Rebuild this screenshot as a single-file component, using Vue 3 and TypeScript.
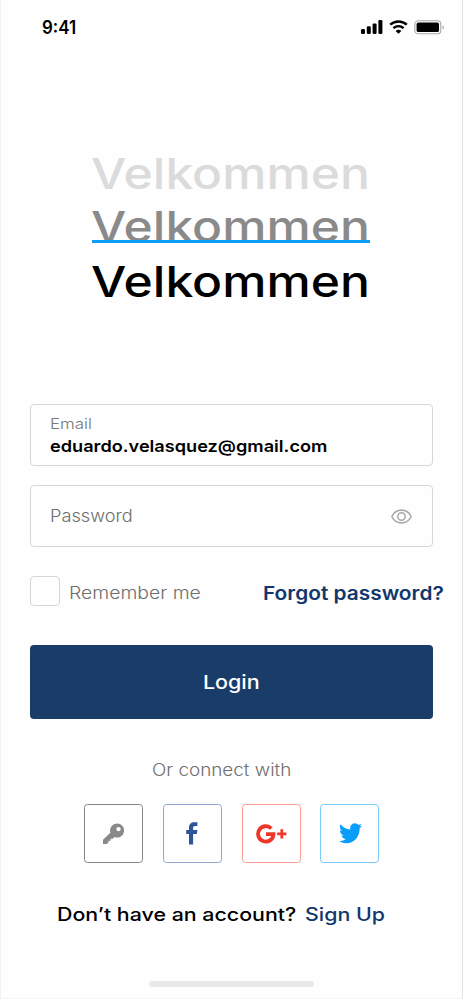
<script setup lang="ts">
import { ref } from 'vue'

interface Provider {
  id: string
  label: string
}

const providers: Provider[] = [
  { id: 'key', label: 'Key' },
  { id: 'facebook', label: 'Facebook' },
  { id: 'google', label: 'Google Plus' },
  { id: 'twitter', label: 'Twitter' },
]
const greeting = 'Velkommen'
const email = ref('eduardo.velasquez@gmail.com')
const remember = ref(false)
</script>

<template>
  <main class="screen">
    <header class="status">
      <span class="time wide">9:41</span>
      <div class="indicators">
        <svg class="signal" viewBox="0 0 22 14">
          <rect x="0" y="9" width="4" height="5" rx="1.2" />
          <rect x="5.8" y="6.3" width="4" height="7.7" rx="1.2" />
          <rect x="11.6" y="3.4" width="4" height="10.6" rx="1.2" />
          <rect x="17.4" y="0" width="4" height="14" rx="1.2" />
        </svg>
        <svg class="wifi" viewBox="0 0 19 14">
          <path d="M1.2 4.7C6 .4 13 .4 17.8 4.7" />
          <path d="M4.4 8.2c3-2.6 7.2-2.6 10.2 0" />
          <path class="dot" d="M6.6 10.9c1.7-1.5 4.1-1.5 5.8 0L9.5 13.8z" />
        </svg>
        <svg class="battery" viewBox="0 0 31 15">
          <rect class="shell" x=".8" y=".8" width="26" height="13" rx="3.4" />
          <rect x="2.6" y="2.6" width="22.4" height="9.4" rx="1.6" />
          <path class="cap" d="M28.6 5.2c1.8.7 1.8 3.7 0 4.4z" />
        </svg>
      </div>
    </header>

    <section class="hero">
      <div class="word faint"><span class="wide">{{ greeting }}</span></div>
      <div class="word mid"><span class="wide">{{ greeting }}</span></div>
      <h1 class="word"><span class="wide">{{ greeting }}</span></h1>
    </section>

    <form class="form" @submit.prevent>
      <div class="field filled">
        <span class="label wide">Email</span>
        <span class="value wide">{{ email }}</span>
      </div>
      <div class="field empty">
        <span class="placeholder wide">Password</span>
        <svg class="eye" viewBox="0 0 20 14">
          <path d="M.8 7C2.7 3 6.100.9 10 .9S17.300 3 19.200 7c-1.900 4-5.300 6.100-9.200 6.100S2.700 11 .8 7z" />
          <circle cx="10" cy="7" r="3.500" />
        </svg>
      </div>
      <div class="options">
        <button type="button" class="check" :aria-checked="remember" role="checkbox" @click="remember = !remember"></button>
        <span class="remember wide">Remember me</span>
        <a class="forgot wide">Forgot password?</a>
      </div>
      <button class="login"><span class="wide">Login</span></button>
    </form>

    <section class="connect">
      <p><span class="wide">Or connect with</span></p>
      <div class="providers">
        <button v-for="p in providers" :key="p.id" :class="['provider', p.id]" :aria-label="p.label">
          <svg v-if="p.id === 'key'" width="21" height="21" viewBox="0.4 0.8 21.1 20.2">
            <path fill-rule="evenodd" d="M14.400.8a7.100 7.100 0 1 1-2.500 13.700l-1.700 1.600H8.100v2.100H6v2.100H4.800v1.200H.4v-4.300l7.400-7.100A7.100 7.100 0 0 1 14.400.8zM16 4.300a2.200 2.200 0 1 0 0 4.400 2.200 2.200 0 0 0 0-4.400z" />
          </svg>
          <svg v-else-if="p.id === 'facebook'" width="12" height="23" viewBox="0 0 12 23">
            <path d="M3 22.500V12H.2V8.100H3V5.600C3 2.100 5 .2 8.200.2h3.200v3.900H9.200C7.700 4.100 7.100 4.800 7.100 6v2.100h4.300L10.800 12H7.100v10.500z" />
          </svg>
          <svg v-else-if="p.id === 'google'" width="31" height="20" viewBox="0 0 31 20">
            <path class="ring" d="M15.300 4.500A7.700 7.700 0 1 0 17.500 10.100H10" />
            <path class="plus" d="M25.800 5.300v9.200M21.200 9.900h9.200" />
          </svg>
          <svg v-else width="23" height="21" viewBox="0 2 24 20.500" preserveAspectRatio="none">
            <path d="M23.950 4.570a10 10 0 0 1-2.820.78 4.960 4.960 0 0 0 2.160-2.720 9.900 9.900 0 0 1-3.120 1.180 4.920 4.920 0 0 0-8.380 4.480C7.690 8.090 4.070 6.130 1.640 3.160a4.820 4.820 0 0 0-.67 2.480c0 1.710.87 3.210 2.190 4.100a4.900 4.900 0 0 1-2.230-.62v.06a4.920 4.920 0 0 0 3.950 4.830 5 5 0 0 1-2.210.08 4.940 4.940 0 0 0 4.600 3.420A9.870 9.870 0 0 1 0 19.540a13.990 13.990 0 0 0 7.550 2.210c9.050 0 14-7.500 14-13.990 0-.21 0-.42-.02-.63a9.940 9.940 0 0 0 2.460-2.550z" />
          </svg>
        </button>
      </div>
    </section>

    <footer class="signup">
      <span class="question wide">Don’t have an account?</span>
      <a class="link wide">Sign Up</a>
    </footer>
    <div class="home"></div>
  </main>
</template>

<style>
body {
  background: #fefefe;
}
</style>

<style scoped>
.screen {
  box-sizing: border-box;
  width: 463px;
  height: 999px;
  display: flex;
  flex-direction: column;
  overflow: hidden;
  border-left: 1px solid #f2f2f2;
  border-right: 1px solid #e2e2e2;
  border-bottom: 1px solid #f4f4f4;
  background: #fefefe;
  color: #000;
  font-family: Inter, 'Liberation Sans', sans-serif;
}
.wide {
  display: block;
  white-space: nowrap;
  transform: scaleX(var(--stretch, 1.1));
  transform-origin: left center;
}
button {
  margin: 0;
  padding: 0;
  font: inherit;
  background: none;
  border: 0;
}
.status {
  display: flex;
  justify-content: space-between;
  align-items: center;
  height: 54px;
  padding: 0 17px 0 41px;
}
.time {
  font-size: 18px;
  font-weight: 600;
  --stretch: 0.94;
}
.indicators {
  display: flex;
  align-items: center;
  gap: 6px;
}
.signal {
  width: 22px;
  height: 14px;
}
.wifi {
  width: 19px;
  height: 14px;
  fill: none;
  stroke: #000;
  stroke-width: 2.4;
}
.wifi .dot {
  fill: #000;
  stroke: none;
}
.battery {
  width: 31px;
  height: 15px;
}
.battery .shell {
  fill: none;
  stroke: #a6a6a6;
  stroke-width: 1.1;
}
.battery .cap {
  fill: #a6a6a6;
}
.hero {
  display: grid;
  grid-template-rows: 53px 55px 54px;
  padding: 92px 92px 0 91px;
}
.word {
  position: relative;
  margin: 0;
  font-size: 43px;
  font-weight: 550;
  line-height: 54px;
  --stretch: 1.158;
}
.word .wide {
  margin-left: -1px;
}
.faint {
  color: #dbdbdb;
}
.mid {
  color: #8a8a8a;
}
.mid::after {
  content: '';
  position: absolute;
  left: 0;
  top: 41px;
  width: 278px;
  height: 3px;
  background: #0a9dfa;
}
.form {
  display: flex;
  flex-direction: column;
  padding: 96px 29px 0;
}
.field {
  box-sizing: border-box;
  width: 402.5px;
  height: 62px;
  border: 1.5px solid #d6d6d6;
  border-radius: 4px;
  padding: 0 20px 0 18.5px;
}
.filled {
  display: flex;
  flex-direction: column;
  padding-top: 8px;
}
.label {
  height: 22px;
  line-height: 23px;
  font-size: 14.7px;
  font-weight: 300;
  color: #777;
  --stretch: 1.15;
}
.value {
  line-height: 22px;
  font-size: 16.5px;
  font-weight: 600;
}
.empty {
  display: flex;
  align-items: center;
  justify-content: space-between;
  margin-top: 19px;
}
.placeholder,
.remember {
  font-size: 17px;
  font-weight: 300;
  color: #6f6f6f;
}
.placeholder {
  --stretch: 1.07;
}
.remember {
  --stretch: 1.14;
}
.eye {
  width: 21px;
  height: 15px;
  fill: none;
  stroke: #aaa;
  stroke-width: 1.5;
}
.options {
  display: grid;
  grid-template-columns: 30px 193.5px 180px;
  column-gap: 9px;
  align-items: center;
  height: 30px;
  margin-top: 29px;
}
.options .wide {
  padding-top: 3px;
}
.options .forgot {
  margin-left: -9px;
}
.check {
  box-sizing: border-box;
  width: 30px;
  height: 30px;
  border: 1.5px solid #d6d6d6;
  border-radius: 4px;
}
.forgot {
  font-size: 18.5px;
  font-weight: 600;
  color: #12376c;
  --stretch: 1.128;
}
.login {
  width: 402.5px;
  height: 74px;
  margin-top: 39px;
  border-radius: 4px;
  background: #193c69;
  color: #fff;
  font-size: 19px;
  font-weight: 500;
  --stretch: 1.13;
}
.login .wide {
  transform-origin: center;
}
.connect p {
  margin: 39px 0 0 150.5px;
  line-height: 24px;
  font-size: 17px;
  font-weight: 300;
  color: #6f6f6f;
  --stretch: 1.11;
}
.providers {
  display: flex;
  gap: 19.8px;
  margin: 22px 0 0 83px;
}
.provider {
  box-sizing: border-box;
  display: flex;
  align-items: center;
  justify-content: center;
  width: 59px;
  height: 59px;
  border: 1.4px solid;
  border-radius: 3.5px;
}
.key {
  border-color: #858585;
  fill: #898989;
}
.facebook {
  border-color: #92a6d2;
  fill: #30549c;
}
.google {
  border-color: #f79d96;
  fill: none;
}
.google .ring {
  stroke: #ee3527;
  stroke-width: 3.8;
}
.google .plus {
  stroke: #ee3527;
  stroke-width: 2.7;
}
.twitter {
  padding-left: 1.5px;
  border-color: #7acbfa;
  fill: #0a9dfa;
}
.signup {
  display: flex;
  align-items: center;
  height: 24px;
  margin-top: 39px;
  padding-left: 56px;
  font-size: 18.2px;
  font-weight: 500;
  --stretch: 1.175;
}
.question {
  width: 248px;
}
.link {
  color: #12376c;
}
.home {
  width: 165px;
  height: 6px;
  margin: 54.5px 0 0 148px;
  border-radius: 3px;
  background: #e8e8e8;
}
</style>
